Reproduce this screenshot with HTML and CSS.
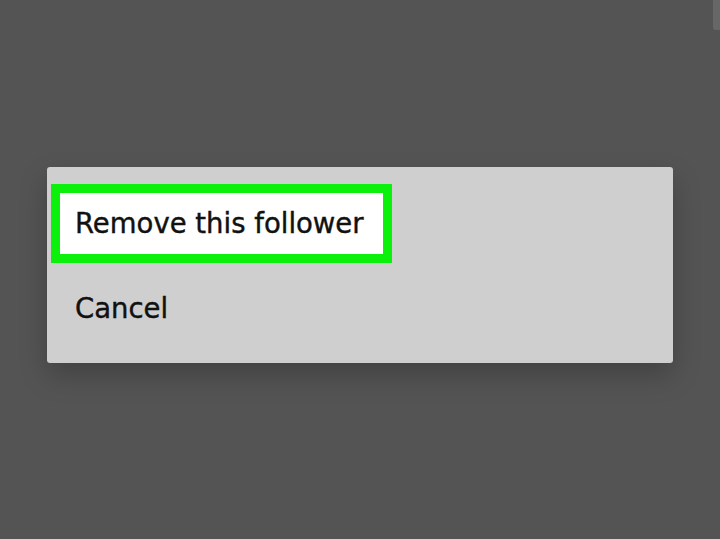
FILE: index.html
```html
<!DOCTYPE html>
<html lang="en">
<head>
    <meta charset="UTF-8">
    <meta name="viewport" content="width=device-width, initial-scale=1.0">
    <title>Remove follower</title>
    <link rel="stylesheet" href="styles.css">
</head>
<body>
    <div class="screen">
        <div class="scroll-hint"></div>
        <div class="dialog">
            <div class="option option-highlight">Remove this follower</div>
            <div class="option option-cancel">Cancel</div>
        </div>
    </div>
</body>
</html>
```

FILE: styles.css
```css
body {
    margin: 0;
    background-color: #545454;
    font-family: 'DejaVu Sans', sans-serif;
}
.screen {
    position: relative;
    width: 720px;
    height: 539px;
    box-sizing: border-box;
    padding-top: 167px;
    padding-left: 47px;
    overflow: hidden;
}
.scroll-hint {
    position: absolute;
    top: 0;
    right: 0;
    width: 7px;
    height: 30px;
    background-color: #676767;
    border-radius: 0 0 0 3px;
}
.dialog {
    width: 626px;
    height: 196px;
    box-sizing: border-box;
    padding: 17px 0 0 4px;
    background-color: #cfcfcf;
    border-radius: 3px;
    box-shadow: 0 12px 28px rgba(0, 0, 0, 0.22);
}
.option {
    font-size: 27.5px;
    line-height: 61px;
    color: #111;
    -webkit-text-stroke: 0.4px #111;
}
.option-highlight {
    width: 341px;
    box-sizing: border-box;
    padding-left: 15px;
    background-color: #fff;
    border: 9px solid #0cf10c;
}
.option-cancel {
    margin-top: 15px;
    padding-left: 24px;
}
```
